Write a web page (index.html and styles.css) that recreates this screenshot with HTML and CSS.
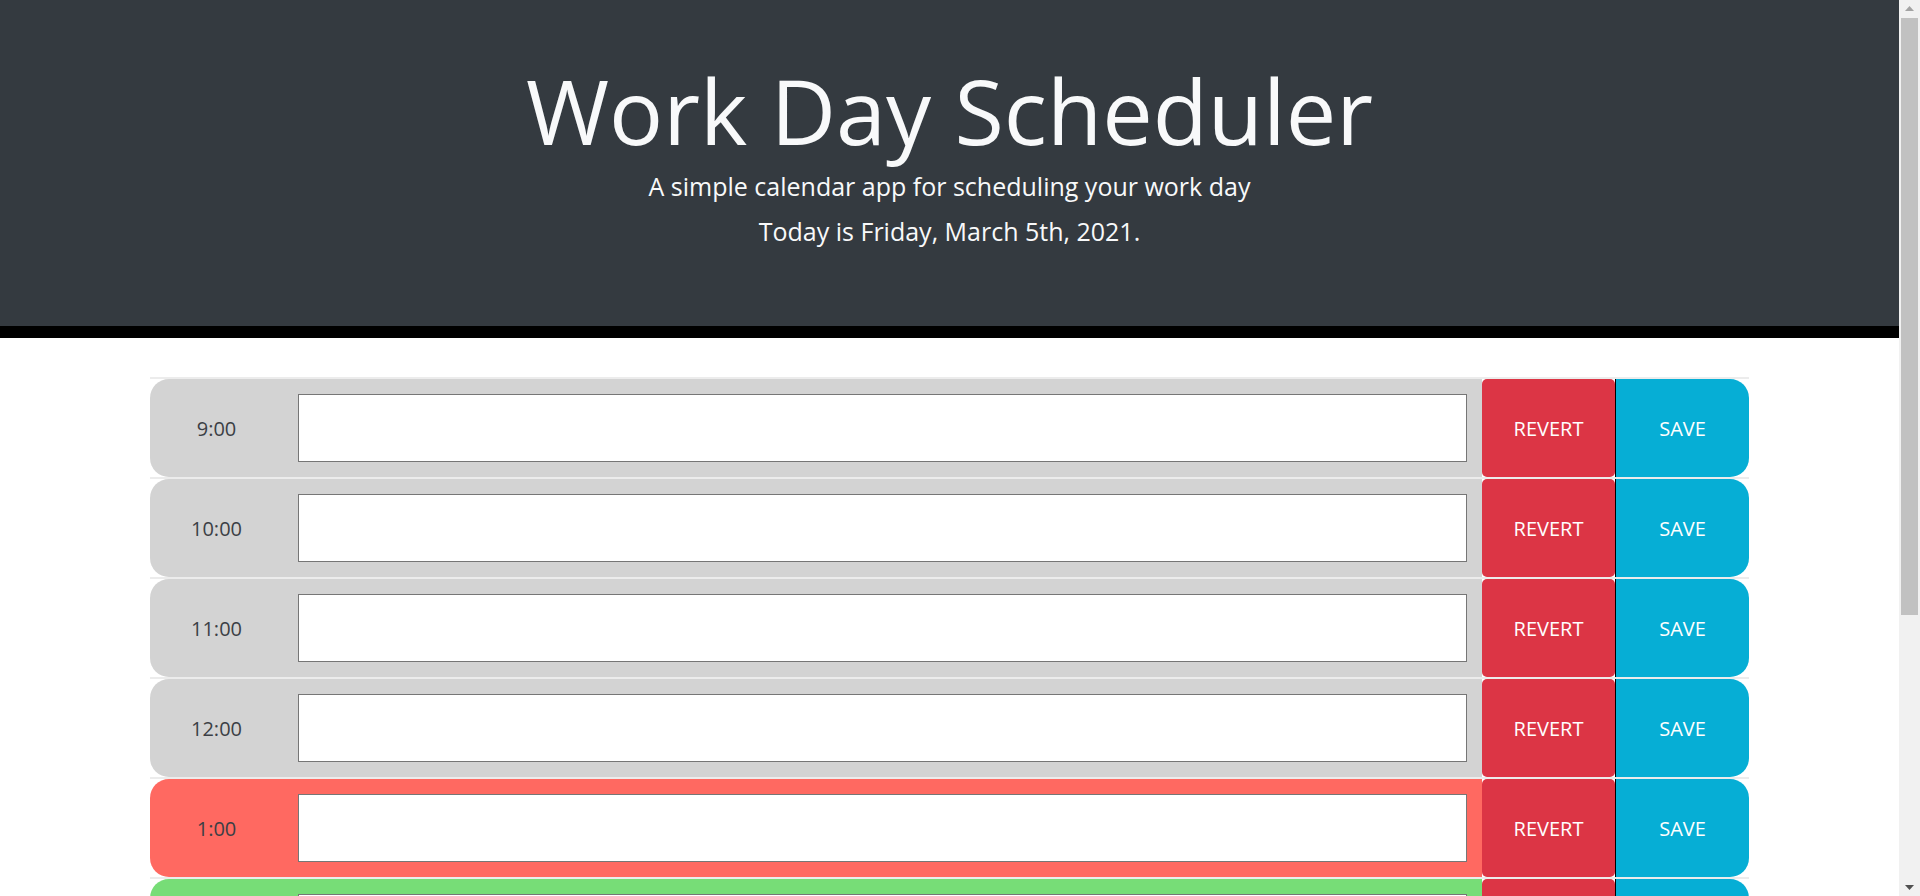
FILE: index.html
```html
<!DOCTYPE html>
<html lang="en">
<head>
<meta charset="utf-8">
<title>Work Day Scheduler</title>
<link rel="stylesheet" href="styles.css">
</head>
<body>
<div class="page">
  <header class="jumbotron">
    <h1 class="title">Work Day Scheduler</h1>
    <p class="lead">A simple calendar app for scheduling your work day</p>
    <p class="lead today">Today is Friday, March 5th, 2021.</p>
  </header>
  <main class="container">
    <div class="row">
      <div class="block past"><div class="hour">9:00</div><div class="desc"><textarea></textarea></div></div>
      <button class="revertBtn">REVERT</button><button class="saveBtn">SAVE</button>
    </div>
    <div class="row">
      <div class="block past"><div class="hour">10:00</div><div class="desc"><textarea></textarea></div></div>
      <button class="revertBtn">REVERT</button><button class="saveBtn">SAVE</button>
    </div>
    <div class="row">
      <div class="block past"><div class="hour">11:00</div><div class="desc"><textarea></textarea></div></div>
      <button class="revertBtn">REVERT</button><button class="saveBtn">SAVE</button>
    </div>
    <div class="row">
      <div class="block past"><div class="hour">12:00</div><div class="desc"><textarea></textarea></div></div>
      <button class="revertBtn">REVERT</button><button class="saveBtn">SAVE</button>
    </div>
    <div class="row">
      <div class="block present"><div class="hour">1:00</div><div class="desc"><textarea></textarea></div></div>
      <button class="revertBtn">REVERT</button><button class="saveBtn">SAVE</button>
    </div>
    <div class="row">
      <div class="block future"><div class="hour">2:00</div><div class="desc"><textarea></textarea></div></div>
      <button class="revertBtn">REVERT</button><button class="saveBtn">SAVE</button>
    </div>
    <div class="row">
      <div class="block future"><div class="hour">3:00</div><div class="desc"><textarea></textarea></div></div>
      <button class="revertBtn">REVERT</button><button class="saveBtn">SAVE</button>
    </div>
    <div class="row">
      <div class="block future"><div class="hour">4:00</div><div class="desc"><textarea></textarea></div></div>
      <button class="revertBtn">REVERT</button><button class="saveBtn">SAVE</button>
    </div>
    <div class="row">
      <div class="block future"><div class="hour">5:00</div><div class="desc"><textarea></textarea></div></div>
      <button class="revertBtn">REVERT</button><button class="saveBtn">SAVE</button>
    </div>
  </main>
</div>
<div class="scrollbar" aria-hidden="true">
  <svg class="arrow" width="21" height="18" viewBox="0 0 21 18"><path d="M6 11 L10.5 6 L15 11 Z" fill="#a3a3a3"/></svg>
  <div class="track"><div class="thumb"></div></div>
  <svg class="arrow" width="21" height="18" viewBox="0 0 21 18"><path d="M6 7 L15 7 L10.5 12 Z" fill="#505050"/></svg>
</div>
</body>
</html>
```
FILE: styles.css
```css
html, body {
  margin: 0;
  padding: 0;
}
body {
  font-family: "Open Sans", "Noto Sans", sans-serif;
  background: #ffffff;
  color: #212529;
}
.page {
  margin-right: 21px;
}

.scrollbar {
  position: fixed;
  top: 0;
  right: 0;
  width: 21px;
  height: 100vh;
  display: flex;
  flex-direction: column;
  background: #f1f1f1;
}
.arrow {
  display: block;
  flex: none;
}
.track {
  flex: 1;
  padding: 0 2px;
}
.thumb {
  height: 597px;
  background: #c1c1c1;
}

.jumbotron {
  box-sizing: border-box;
  height: 338px;
  padding: 56px 0 0;
  margin: 0;
  background: #343a40;
  border-bottom: 12px solid #000000;
  text-align: center;
  color: #f8f9fa;
}
.title {
  margin: 0;
  font-size: 90px;
  line-height: 108px;
  font-weight: 400;
}
.lead {
  margin: 4px 0 0;
  font-size: 25px;
  line-height: 37.5px;
  font-weight: 400;
}
.today {
  margin-top: 7.5px;
}

.container {
  width: 1599px;
  margin: 39px auto 0;
}
.row {
  box-sizing: border-box;
  display: flex;
  height: 100px;
  border-top: 2px solid #ececec;
}
.block {
  display: flex;
  width: 1332px;
  border-radius: 19px 0 0 19px;
}
.past { background: #d3d3d3; }
.present { background: #ff6961; }
.future { background: #77dd77; }
.hour {
  width: 133px;
  display: flex;
  align-items: center;
  justify-content: center;
  font-size: 20px;
  color: #3b3f45;
}
.desc {
  flex: 1;
  display: flex;
  align-items: center;
  padding: 0 15px;
}
.desc textarea {
  box-sizing: border-box;
  display: block;
  width: 100%;
  height: 68px;
  margin: 0;
  padding: 10px;
  border: 1px solid #767676;
  background: #ffffff;
  resize: none;
  font-family: inherit;
}
.revertBtn, .saveBtn {
  box-sizing: border-box;
  margin: 0;
  padding: 0;
  border: none;
  font-family: "Open Sans", "Noto Sans", sans-serif;
  font-size: 20px;
  color: #ffffff;
  cursor: pointer;
}
.revertBtn {
  width: 133px;
  background: #dc3545;
  border-radius: 5px;
}
.saveBtn {
  width: 134px;
  background: #06aed5;
  border-left: 1px solid #000000;
  border-radius: 0 19px 19px 0;
}
```
